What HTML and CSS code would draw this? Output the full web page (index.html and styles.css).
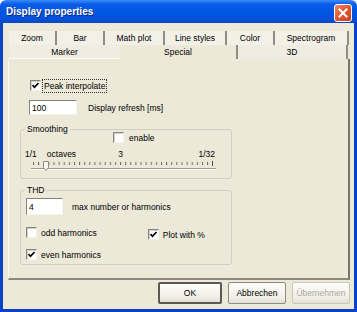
FILE: index.html
```html
<!DOCTYPE html>
<html lang="en">
  <head>
    <meta charset="UTF-8" />
    <title>Display properties</title>
    <link rel="stylesheet" href="styles.css">
  </head>
  <body>
    <div class="window">
      <div class="titlebar">
        <span class="title">Display properties</span>
        <span class="close">
          <svg width="10" height="10" viewBox="0 0 10 10">
            <path d="M1.5 1.5 L8.5 8.5 M8.5 1.5 L1.5 8.5" stroke="#fff" stroke-width="2" stroke-linecap="square" />
          </svg>
        </span>
      </div>
      <div class="frame">
        <div class="tabrow">
          <div class="tab t-zoom">Zoom</div>
          <div class="tab t-bar">Bar</div>
          <div class="tab t-math">Math plot</div>
          <div class="tab t-line">Line styles</div>
          <div class="tab t-color">Color</div>
          <div class="tab t-spec">Spectrogram</div>
        </div>
        <div class="tabrow front">
          <div class="tab t-marker">Marker</div>
          <div class="tab t-special active">Special</div>
          <div class="tab t-3d">3D</div>
        </div>
        <div class="panel">
          <div class="row peak">
            <span class="cb checked">
              <svg width="9" height="9" viewBox="0 0 9 9"><path d="M1.5 4.2 L3.5 6.3 L7.5 2" fill="none" stroke="#000" stroke-width="1.7" /></svg>
            </span>
            <span class="focus">Peak interpolate</span>
          </div>
          <div class="row refresh">
            <span class="field f-refresh">100</span>
            <span class="lbl">Display refresh [ms]</span>
          </div>

          <div class="group smoothing">
            <div class="legend">Smoothing</div>
            <div class="row enable">
              <span class="cb"></span>
              <span class="lbl">enable</span>
            </div>
            <div class="row values">
              <span>1/1</span>
              <span class="oct">octaves</span>
              <span class="three">3</span>
              <span class="last">1/32</span>
            </div>
            <svg class="slider" width="190" height="14" viewBox="0 0 190 14">
              <defs>
                <pattern id="tk" x="3" y="0" width="5.12" height="14" patternUnits="userSpaceOnUse">
                  <rect width="1" height="14" fill="#6b6b63" />
                </pattern>
              </defs>
              <rect x="3" y="3" width="179" height="3" fill="url(#tk)" />
              <rect x="182" y="2" width="1" height="5" fill="#4a4a44" />
              <rect x="1" y="9" width="185" height="1" fill="#9c9a8c" />
              <rect x="1" y="10" width="185" height="1" fill="#fff" />
              <path d="M13.5 2.5 H18.5 V8.5 L16 11.5 L13.5 8.5 Z" fill="#f7f6f0" stroke="#8d8c82" />
            </svg>
          </div>

          <div class="group thd">
            <div class="legend">THD</div>
            <div class="row harm">
              <span class="field f-harm">4</span>
              <span class="lbl">max number or harmonics</span>
            </div>
            <div class="row odd">
              <span class="cb"></span>
              <span class="lbl">odd harmonics</span>
              <span class="cb checked plot">
                <svg width="9" height="9" viewBox="0 0 9 9"><path d="M1.5 4.2 L3.5 6.3 L7.5 2" fill="none" stroke="#000" stroke-width="1.7" /></svg>
              </span>
              <span class="lbl">Plot with %</span>
            </div>
            <div class="row even">
              <span class="cb checked">
                <svg width="9" height="9" viewBox="0 0 9 9"><path d="M1.5 4.2 L3.5 6.3 L7.5 2" fill="none" stroke="#000" stroke-width="1.7" /></svg>
              </span>
              <span class="lbl">even harmonics</span>
            </div>
          </div>
        </div>
        <div class="buttons">
          <button class="btn default">OK</button>
          <button class="btn">Abbrechen</button>
          <button class="btn disabled">Übernehmen</button>
        </div>
      </div>
    </div>
  </body>
</html>
```

FILE: styles.css
```css
* {
  box-sizing: border-box;
}
body {
  margin: 0;
  background: #fff;
  font-family: "Liberation Sans", Arial, sans-serif;
  font-size: 8.5px;
  color: #000;
}
.window {
  width: 357px;
  height: 312px;
  display: flex;
  flex-direction: column;
}
.titlebar {
  height: 23px;
  display: flex;
  align-items: center;
  justify-content: space-between;
  padding: 0 5px 0 6px;
  background: linear-gradient(#3c8df8 0%, #0b5ce8 18%, #0054e3 55%, #0650d8 85%, #0a46c4 100%);
  border-radius: 6px 6px 0 0;
}
.title {
  color: #fff;
  font-weight: bold;
  font-size: 10px;
  text-shadow: 1px 1px #0a2d86;
}
.close {
  width: 18px;
  height: 18px;
  margin-top: 2px;
  display: flex;
  align-items: center;
  justify-content: center;
  border: 1px solid #fff;
  border-radius: 3px;
  background: linear-gradient(135deg, #f08a6a 0%, #e05a34 45%, #c8401c 100%);
}
.frame {
  flex: 1;
  display: flex;
  flex-direction: column;
  background: #ece9d8;
  border: 3px solid #0842c6;
  border-top: 0;
  padding: 8px 4px 0 5px;
}
.tabrow {
  display: flex;
  height: 14px;
  margin-left: 1px;
}
.tab {
  display: flex;
  align-items: center;
  justify-content: center;
  height: 14px;
  background: #f3f1e7;
  border-right: 2px solid #8f8e86;
}
.t-zoom { width: 48px; }
.t-bar { width: 48px; }
.t-math { width: 60px; }
.t-line { width: 62px; }
.t-color { width: 48px; }
.t-spec { width: 74px; }
.front .tab {
  background: #efede2;
}
.t-marker {
  width: 111px;
  border-right: 0;
  border-bottom: 1px solid #fbfaf5;
}
.t-special {
  width: 118px;
  border-right: 2px solid #8f8e86;
}
.front .active {
  background: #ece9d8;
}
.t-3d {
  width: 110px;
}
.panel {
  height: 221px;
  background: #ece9d8;
  border-left: 1px solid #fbfaf5;
  border-right: 2px solid #77766e;
  border-bottom: 2px solid #8b897d;
  padding: 20px 0 0 11px;
}
.row {
  display: flex;
  align-items: center;
}
.cb {
  width: 11px;
  height: 11px;
  flex: none;
  display: flex;
  align-items: center;
  justify-content: center;
  background: #fff;
  border-top: 1px solid #85847c;
  border-left: 1px solid #85847c;
  border-right: 1px solid #f4f3ee;
  border-bottom: 1px solid #f4f3ee;
  box-shadow: inset 1px 1px #d4d0c8;
}
.peak {
  margin-left: 10px;
  height: 13px;
}
.focus {
  margin-left: 2px;
  padding: 1px 1px;
  outline: 1px dotted #333;
  line-height: 10px;
}
.field {
  background: #fff;
  border-top: 1px solid #85847c;
  border-left: 1px solid #85847c;
  border-right: 1px solid #f4f3ee;
  border-bottom: 1px solid #f4f3ee;
  padding-left: 2px;
  display: flex;
  align-items: center;
}
.refresh {
  margin: 8px 0 0 9px;
}
.f-refresh {
  width: 48px;
  height: 15px;
}
.refresh .lbl {
  margin-left: 11px;
}
.group {
  width: 212px;
  border: 1px solid #d0cfbf;
  border-radius: 3px;
}
.legend {
  width: fit-content;
  margin: -6px 0 0 4px;
  padding: 0 2px;
  line-height: 10px;
  background: #ece9d8;
}
.smoothing {
  margin-top: 14px;
  height: 50px;
}
.enable {
  margin: -2px 0 0 92px;
}
.enable .lbl {
  margin-left: 5px;
}
.values {
  margin: 6px 0 0 4px;
  padding-right: 16px;
  line-height: 10px;
}
.oct {
  margin-left: 10px;
}
.three {
  margin-left: 42px;
}
.last {
  margin-left: auto;
}
.slider {
  display: block;
  margin: 0 0 0 9px;
}
.thd {
  margin-top: 11px;
  height: 75px;
}
.harm {
  margin: 3px 0 0 5px;
}
.f-harm {
  width: 37px;
  height: 17px;
}
.harm .lbl {
  margin-left: 9px;
}
.odd {
  margin: 10px 0 0 5px;
}
.odd .lbl,
.even .lbl {
  margin-left: 4px;
}
.plot {
  margin: 4px 0 0 51px;
}
.odd .plot + .lbl {
  margin-top: 4px;
}
.even {
  margin: 9px 0 0 5px;
}
.buttons {
  display: flex;
  justify-content: flex-end;
  gap: 6px;
  margin: 2px 0 0 0;
  padding-right: 0;
}
.btn {
  width: 58px;
  height: 22px;
  padding: 0;
  font-family: inherit;
  font-size: 8.5px;
  color: #000;
  background: linear-gradient(#fdfdfb, #f1efe8 70%, #e2dfd4);
  border: 1px solid #8e8c80;
  border-radius: 2px;
}
.default {
  width: 64px;
  border: 2px solid #5a5952;
}
.disabled {
  color: #aca899;
  border-color: #c9c7ba;
}
```
